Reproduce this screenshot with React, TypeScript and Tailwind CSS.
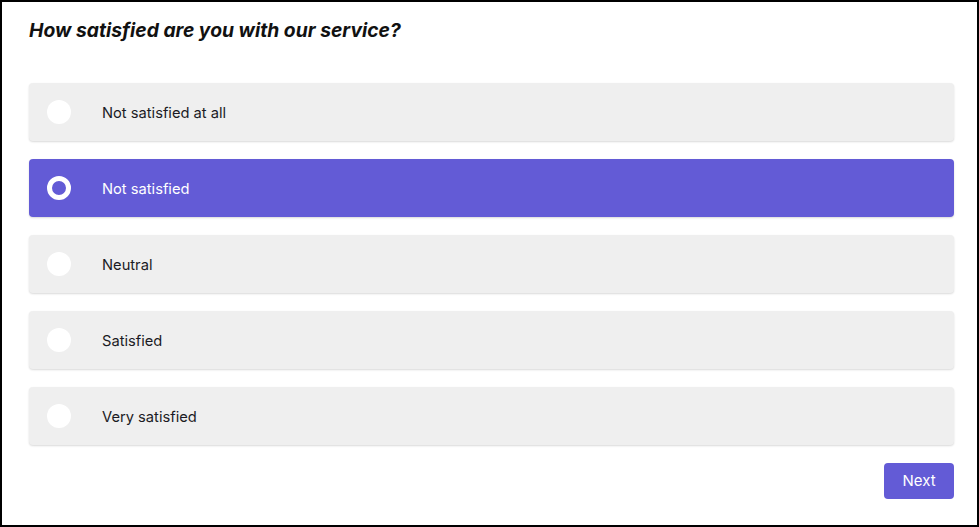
import { useState } from 'react';

const options = ['Not satisfied at all', 'Not satisfied', 'Neutral', 'Satisfied', 'Very satisfied'];

export default function App() {
  const [selected, setSelected] = useState(1);

  return (
    <div className="h-[527px] w-[979px] border-2 border-black bg-white pl-[27px] pr-[23px] pt-[14px] font-['Inter',sans-serif]">
      <h1 className="text-[19.3px] leading-[28px] font-bold italic text-[#111]">How satisfied are you with our service?</h1>

      <div className="mt-[39px] flex flex-col gap-[18px]">
        {options.map((label, i) => {
          const active = i === selected;
          return (
            <button
              key={label}
              onClick={() => setSelected(i)}
              className={
                active
                  ? 'flex h-[58px] w-full items-center rounded-[4px] bg-[#635bd6] pl-[18px] text-left shadow-[0_1px_2px_rgba(0,0,0,0.15)]'
                  : 'flex h-[58px] w-full items-center rounded-[4px] bg-[#efefef] pl-[18px] text-left shadow-[0_1px_2px_rgba(0,0,0,0.15)]'
              }
            >
              <span
                className={
                  active
                    ? 'h-[24px] w-[24px] shrink-0 rounded-full border-[5px] border-white'
                    : 'h-[24px] w-[24px] shrink-0 rounded-full bg-white'
                }
              />
              <span
                className={
                  active
                    ? 'ml-[31px] pt-[2px] text-[14.7px] text-white'
                    : 'ml-[31px] pt-[2px] text-[14.7px] text-[#1b1b24]'
                }
              >
                {label}
              </span>
            </button>
          );
        })}
      </div>

      <div className="mt-[18px] flex justify-end">
        <button className="h-[36px] w-[70px] rounded-[4px] bg-[#635bd6] text-[15px] text-white">Next</button>
      </div>
    </div>
  );
}
